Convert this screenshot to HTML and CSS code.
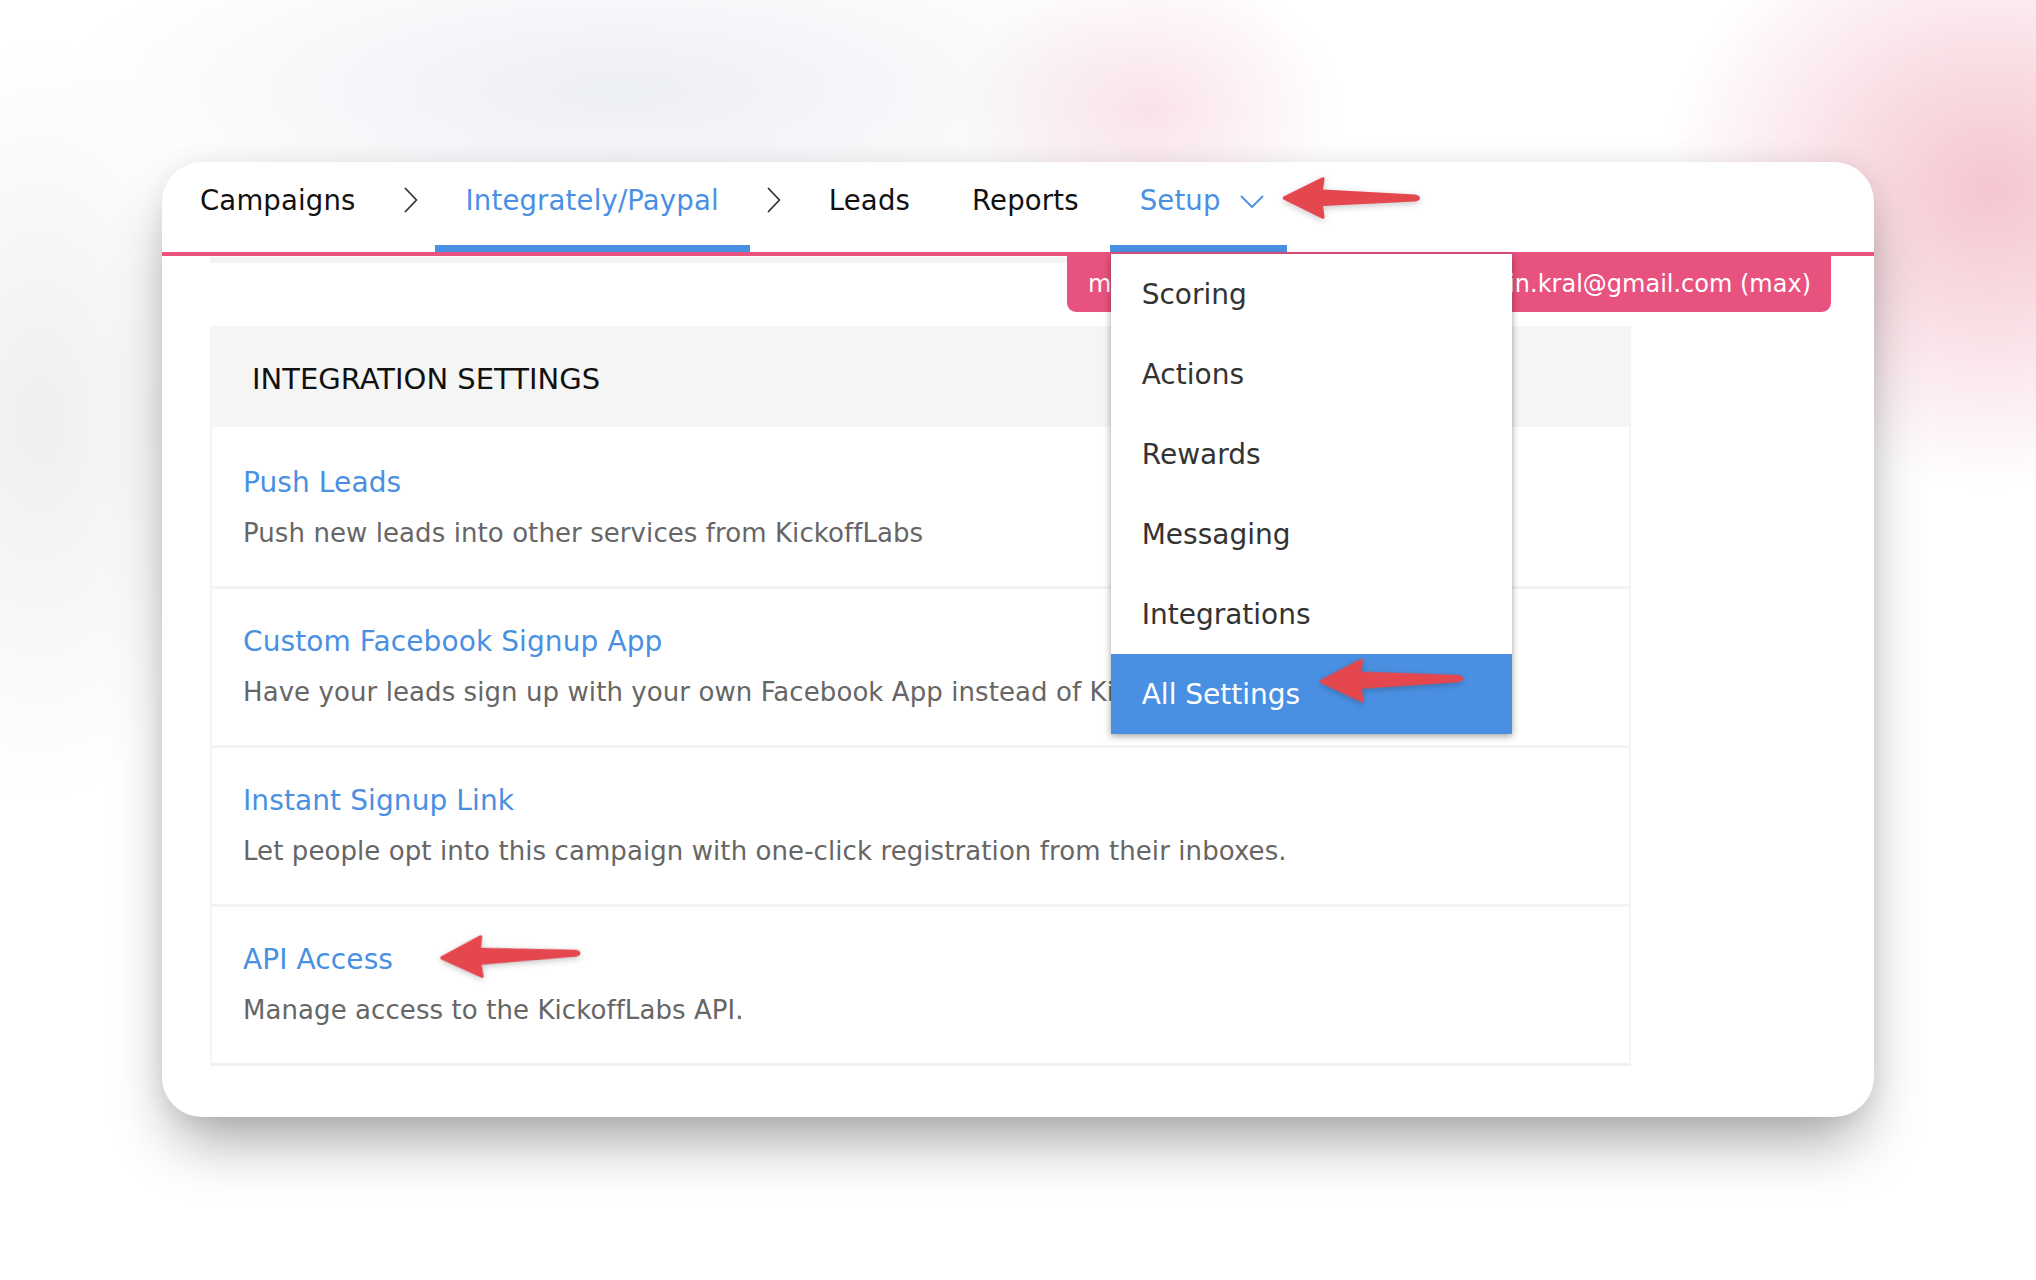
FILE: index.html
```html
<!DOCTYPE html>
<html lang="en">
<head>
<meta charset="utf-8">
<title>Integrately/Paypal – Integration Settings</title>
<link rel="stylesheet" href="styles.css">
</head>
<body>
<div class="stage">
  <div class="card">
    <nav class="tabs">
      <a class="tab tab-first">Campaigns</a>
      <span class="crumb">
        <svg width="14" height="26" viewBox="0 0 14 26"><polyline points="1.5,1.5 12.5,13 1.5,24.5" fill="none" stroke="#333" stroke-width="1.8" stroke-linecap="round" stroke-linejoin="round"/></svg>
      </span>
      <a class="tab is-active">Integrately/Paypal</a>
      <span class="crumb">
        <svg width="14" height="26" viewBox="0 0 14 26"><polyline points="1.5,1.5 12.5,13 1.5,24.5" fill="none" stroke="#333" stroke-width="1.8" stroke-linecap="round" stroke-linejoin="round"/></svg>
      </span>
      <a class="tab">Leads</a>
      <a class="tab">Reports</a>
      <div class="tab tab-setup is-active is-open">
        <span>Setup</span>
        <svg class="caret" width="24" height="14" viewBox="0 0 24 14"><polyline points="1.5,1.5 12,12 22.5,1.5" fill="none" stroke="#4a90e2" stroke-width="1.8" stroke-linecap="round" stroke-linejoin="round"/></svg>
        <ul class="menu">
          <li class="menu-item">Scoring</li>
          <li class="menu-item">Actions</li>
          <li class="menu-item">Rewards</li>
          <li class="menu-item">Messaging</li>
          <li class="menu-item">Integrations</li>
          <li class="menu-item is-current">All Settings</li>
        </ul>
      </div>
    </nav>

    <div class="ribbon">
      <span>masquerading as customer</span>
      <span>martin.kral@gmail.com (max)</span>
    </div>

    <div class="content">
      <div class="strip"></div>
      <section class="panel">
        <header class="panel-head">INTEGRATION SETTINGS</header>
        <div class="row">
          <a class="row-title">Push Leads</a>
          <p class="row-desc">Push new leads into other services from KickoffLabs</p>
        </div>
        <div class="row">
          <a class="row-title">Custom Facebook Signup App</a>
          <p class="row-desc">Have your leads sign up with your own Facebook App instead of KickoffLabs' default app.</p>
        </div>
        <div class="row">
          <a class="row-title">Instant Signup Link</a>
          <p class="row-desc">Let people opt into this campaign with one-click registration from their inboxes.</p>
        </div>
        <div class="row">
          <a class="row-title">API Access</a>
          <p class="row-desc">Manage access to the KickoffLabs API.</p>
        </div>
      </section>
    </div>
  </div>

  <!-- callout arrows drawn over the page -->
  <svg class="callout callout-setup" viewBox="0 0 140 44" width="140" height="44"><path d="M2.5 20.5 Q1 22 2.5 23.5 L41 42.5 Q44 43.5 43.5 40.5 L42 30 L134 25.5 Q139 24.5 139 22 Q139 19.5 134 18.5 L42 13.5 L43.5 3.5 Q44 0.5 41 1.5 Z" fill="#e4474d"/></svg>
  <svg class="callout callout-menu" viewBox="0 0 140 44" width="150" height="46"><path d="M2.5 20.5 Q1 22 2.5 23.5 L41 42.5 Q44 43.5 43.5 40.5 L42 30 L134 25.5 Q139 24.5 139 22 Q139 19.5 134 18.5 L42 13.5 L43.5 3.5 Q44 0.5 41 1.5 Z" fill="#e4474d"/></svg>
  <svg class="callout callout-api" viewBox="0 0 140 44" width="148" height="45"><path d="M2.5 20.5 Q1 22 2.5 23.5 L41 42.5 Q44 43.5 43.5 40.5 L42 30 L134 25.5 Q139 24.5 139 22 Q139 19.5 134 18.5 L42 13.5 L43.5 3.5 Q44 0.5 41 1.5 Z" fill="#e4474d"/></svg>
</div>
</body>
</html>
```

FILE: styles.css
```css
* { box-sizing: border-box; }

html, body {
  margin: 0;
  padding: 0;
}

body {
  width: 2036px;
  height: 1280px;
  overflow: hidden;
  font-family: "DejaVu Sans", Verdana, sans-serif;
  background: #fff;
}

.stage {
  position: relative;
  width: 2036px;
  height: 1280px;
  padding: 162px 0 0 162px;
  background:
    radial-gradient(ellipse 330px 300px at 1990px 190px, rgba(236, 150, 170, 0.55), rgba(236, 150, 170, 0) 100%),
    radial-gradient(ellipse 190px 150px at 1150px 110px, rgba(240, 175, 190, 0.35), rgba(240, 175, 190, 0) 100%),
    radial-gradient(ellipse 560px 170px at 620px 90px, rgba(222, 226, 234, 0.55), rgba(222, 226, 234, 0) 100%),
    radial-gradient(ellipse 200px 380px at 40px 420px, rgba(226, 226, 230, 0.55), rgba(226, 226, 230, 0) 100%),
    #ffffff;
}

/* main window */
.card {
  position: relative;
  width: 1712px;
  height: 955px;
  background: #fff;
  border-radius: 40px;
  box-shadow:
    0 34px 60px -12px rgba(0, 0, 0, 0.36),
    0 0 26px rgba(0, 0, 0, 0.07);
}

/* top navigation */
.tabs {
  display: flex;
  align-items: stretch;
  height: 94px;
  border-bottom: 4px solid #e8527f;
}

.tab {
  position: relative;
  display: flex;
  align-items: center;
  padding: 0 31px 14px;
  font-size: 27.5px;
  letter-spacing: 0.17px;
  color: #111;
  text-decoration: none;
  white-space: nowrap;
}

.tab-first { padding-left: 38px; }

.tab.is-active { color: #4a90e2; }
.tab.is-active::after {
  content: "";
  position: absolute;
  left: 0;
  right: 0;
  bottom: 0;
  height: 7px;
  background: #4a90e2;
}

.crumb {
  display: flex;
  align-items: center;
  justify-content: center;
  width: 48px;
  padding-bottom: 14px;
}

.tab-setup {
  padding-left: 30px;
  padding-right: 23px;
}
.tab-setup .caret {
  margin-left: 19px;
  margin-top: 3px;
}

/* setup dropdown */
.menu {
  position: absolute;
  left: 1px;
  top: calc(100% + 2px);
  z-index: 5;
  width: 401px;
  margin: 0;
  padding: 0;
  list-style: none;
  letter-spacing: 0;
  background: #fff;
  box-shadow: 0 2px 7px rgba(0, 0, 0, 0.38);
}

.menu-item {
  display: flex;
  align-items: center;
  height: 80px;
  padding-left: 31px;
  font-size: 28px;
  color: #333;
}

.menu-item.is-current {
  background: #4a90e2;
  color: #fff;
}

/* account ribbon under the navigation */
.ribbon {
  position: absolute;
  top: 94px;
  left: 905px;
  right: 43px;
  height: 56px;
  display: flex;
  align-items: center;
  justify-content: space-between;
  padding: 0 20px 0 21px;
  background: #e8527f;
  border-radius: 0 0 9px 9px;
  color: #fff;
  font-size: 24px;
  white-space: nowrap;
}

/* settings body */
.content {
  padding: 0 0 0 48px;
}

.strip {
  width: 1421px;
  height: 6px;
  margin-top: 1px;
  background: #f4f4f4;
}

.panel {
  width: 1421px;
  margin-top: 63px;
  border: 2px solid #f4f4f4;
  border-top: 0;
  border-bottom: 3px solid #f1f1f1;
}

.panel-head {
  display: flex;
  align-items: center;
  height: 101px;
  margin: 0 -2px;
  padding: 5px 0 0 42px;
  background: #f5f5f5;
  font-size: 29px;
  color: #111;
}

.row {
  height: 159px;
  padding: 38px 0 0 31px;
}

.row + .row {
  border-top: 3px solid #f3f3f3;
  padding-top: 35px;
}

.row-title {
  display: block;
  font-size: 28px;
  letter-spacing: 0.1px;
  line-height: 36px;
  color: #4a90e2;
  text-decoration: none;
}

.row-desc {
  margin: 14px 0 0;
  font-size: 26px;
  letter-spacing: 0.08px;
  line-height: 36px;
  color: #666;
  white-space: nowrap;
}

/* red callout arrows */
.callout {
  position: absolute;
  z-index: 10;
  filter: drop-shadow(0 2px 3px rgba(0, 0, 0, 0.22));
}

.callout-setup {
  left: 1281px;
  top: 176px;
}

.callout-menu {
  left: 1316px;
  top: 657px;
  transform: rotate(-1.2deg);
}

.callout-api {
  left: 436px;
  top: 933px;
  transform: rotate(-2deg);
}
```
